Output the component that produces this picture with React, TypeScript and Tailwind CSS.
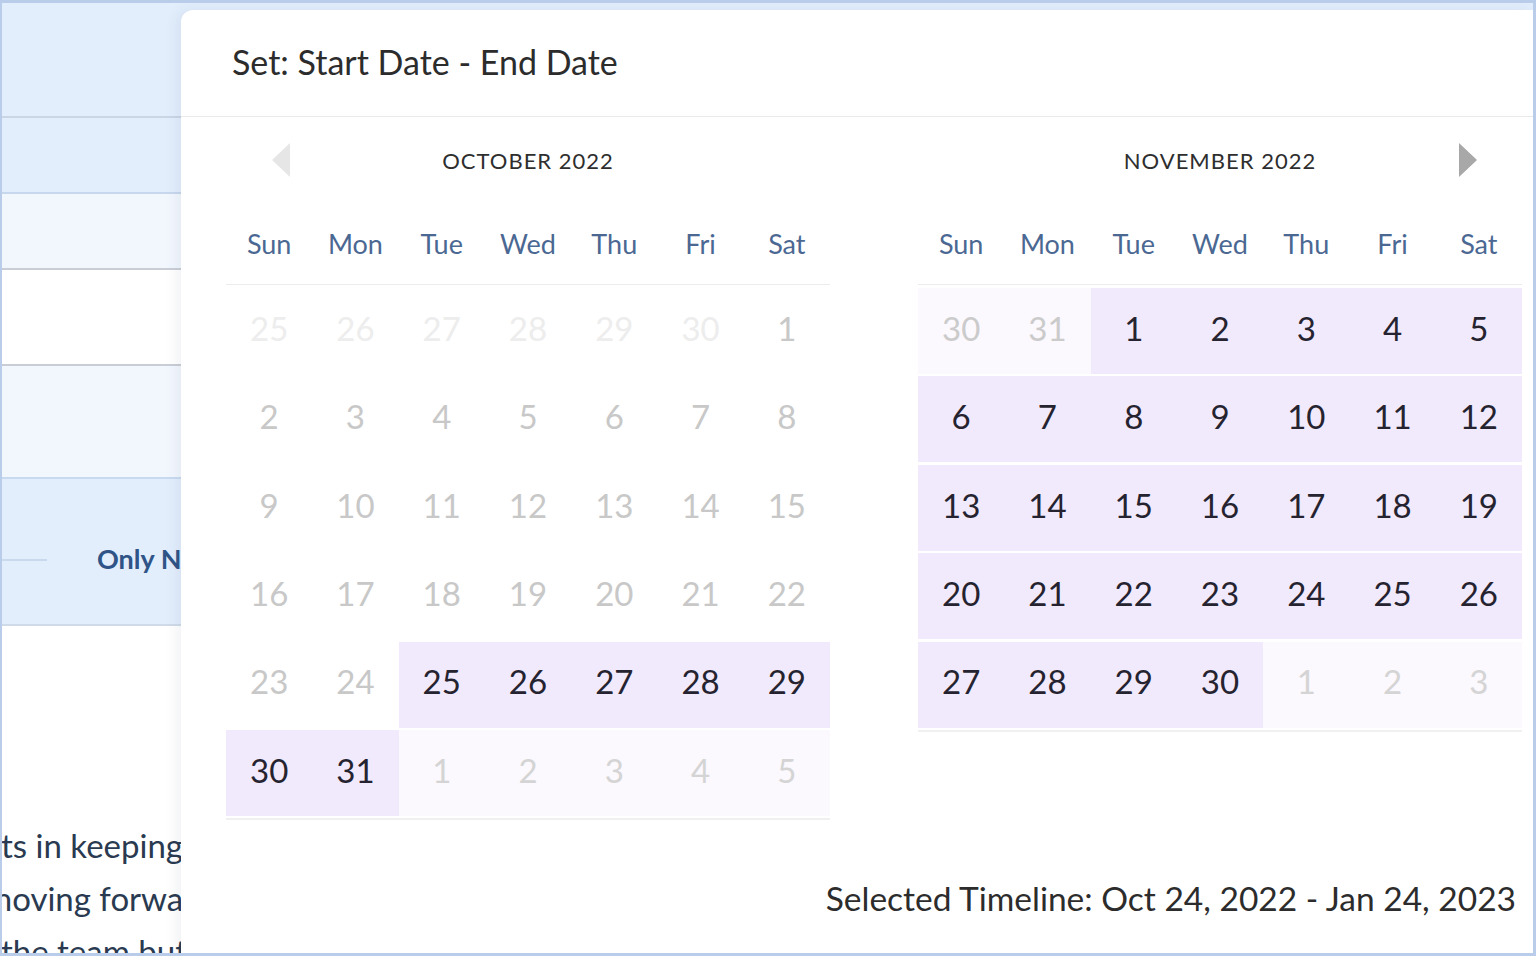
import React from 'react';

type Kind = 'faint' | 'muted' | 'range' | 'next' | 'prev';
type Cell = { d: number; k: Kind };

const days = ['Sun', 'Mon', 'Tue', 'Wed', 'Thu', 'Fri', 'Sat'];

const oct: Cell[][] = [
  [25, 26, 27, 28, 29, 30].map((d) => ({ d, k: 'faint' as Kind })).concat([{ d: 1, k: 'muted' }]),
  [2, 3, 4, 5, 6, 7, 8].map((d) => ({ d, k: 'muted' as Kind })),
  [9, 10, 11, 12, 13, 14, 15].map((d) => ({ d, k: 'muted' as Kind })),
  [16, 17, 18, 19, 20, 21, 22].map((d) => ({ d, k: 'muted' as Kind })),
  [
    { d: 23, k: 'muted' },
    { d: 24, k: 'muted' },
    ...[25, 26, 27, 28, 29].map((d) => ({ d, k: 'range' as Kind })),
  ],
  [
    { d: 30, k: 'range' },
    { d: 31, k: 'range' },
    ...[1, 2, 3, 4, 5].map((d) => ({ d, k: 'next' as Kind })),
  ],
];

const nov: Cell[][] = [
  [
    { d: 30, k: 'prev' },
    { d: 31, k: 'prev' },
    ...[1, 2, 3, 4, 5].map((d) => ({ d, k: 'range' as Kind })),
  ],
  [6, 7, 8, 9, 10, 11, 12].map((d) => ({ d, k: 'range' as Kind })),
  [13, 14, 15, 16, 17, 18, 19].map((d) => ({ d, k: 'range' as Kind })),
  [20, 21, 22, 23, 24, 25, 26].map((d) => ({ d, k: 'range' as Kind })),
  [
    ...[27, 28, 29, 30].map((d) => ({ d, k: 'range' as Kind })),
    ...[1, 2, 3].map((d) => ({ d, k: 'next' as Kind })),
  ],
];

const kindClass: Record<Kind, string> = {
  faint: 'bg-white text-[#ededed]',
  muted: 'bg-white text-[#c8c8c8]',
  range: 'bg-[#f1e9fc] text-[#25232f]',
  next: 'bg-[#fbf8fe] text-[#d4d4d4]',
  prev: 'bg-[#fbf8fe] text-[#cbcbcb]',
};

function Month({
  title,
  rows,
  arrow,
}: {
  title: string;
  rows: Cell[][];
  arrow: 'left' | 'right';
}) {
  return (
    <div className="w-[604px] flex flex-col">
      <div className="h-[86px] grid grid-cols-[1fr_auto_1fr] items-center">
        <div className="flex items-center">
          {arrow === 'left' && (
            <svg width="18" height="34" viewBox="0 0 18 34" className="ml-[46px]">
              <polygon points="18,0 18,34 0,17" fill="#e6e6e6" />
            </svg>
          )}
        </div>
        <div className="text-[22px] tracking-[1px] text-[#2e2e2e] font-['Lato',sans-serif] uppercase">
          {title}
        </div>
        <div className="flex items-center justify-end">
          {arrow === 'right' && (
            <svg width="18" height="34" viewBox="0 0 18 34" className="mr-[45px]">
              <polygon points="0,0 0,34 18,17" fill="#a8a8a8" />
            </svg>
          )}
        </div>
      </div>
      <div className="h-[82px] grid grid-cols-7 items-center border-b border-[#ececec]">
        {days.map((d) => (
          <div
            key={d}
            className="text-center text-[27px] text-[#4b6893] font-['Lato',sans-serif] pt-[2px]"
          >
            {d}
          </div>
        ))}
      </div>
      <div className="mt-[3px] flex flex-col gap-[2.4px] pb-[2px] border-b-2 border-[#f0f0f0]">
        {rows.map((row, i) => (
          <div key={i} className="grid grid-cols-7 h-[86px]">
            {row.map((c, j) => (
              <div
                key={j}
                className={`flex items-center justify-center pb-[5px] text-[33px] font-normal font-['Lato',sans-serif] ${kindClass[c.k]}`}
              >
                {c.d}
              </div>
            ))}
          </div>
        ))}
      </div>
    </div>
  );
}

export default function App() {
  return (
    <div className="relative w-[1536px] h-[956px] overflow-hidden bg-white border-t-[3px] border-l-[2px] border-r-[3px] border-b-[3px] border-[#b9cce9] font-['Lato',sans-serif]">
      {/* background page */}
      <div className="flex flex-col">
        <div className="h-[115px] bg-[#e2eefc] border-b-2 border-[#cad6e5]" />
        <div className="h-[76px] bg-[#e2eefc] border-b-2 border-[#c7d8ee]" />
        <div className="h-[76px] bg-[#f2f7fe] border-b-2 border-[#c9ced6]" />
        <div className="h-[96px] bg-white border-b-2 border-[#c9ced6]" />
        <div className="h-[113px] bg-[#f2f7fe] border-b-2 border-[#c8daf0]" />
        <div className="h-[147px] bg-[#e2eefc] border-b-2 border-[#cfdbe8] flex items-center pt-[16px]">
          <div className="w-[45px] h-[2px] bg-[#c9d9ee]" />
          <div className="ml-[50px] text-[27px] font-bold text-[#2f5487] whitespace-nowrap">
            Only New Items
          </div>
        </div>
        <div className="mt-[193px] text-[33px] leading-[53px] text-[#2a3a50] whitespace-nowrap">
          <div className="-ml-[1px]">ts in keeping with the goals</div>
          <div className="-ml-[17px]">moving forward with the plan</div>
          <div className="-ml-[1px]">the team but</div>
        </div>
      </div>

      {/* popup overlay */}
      <div className="absolute left-[179px] top-[7px] right-0 bottom-0 bg-white rounded-tl-[12px] shadow-[-4px_0_14px_rgba(40,60,90,0.07)] flex flex-col">
        <div className="h-[107px] border-b border-[#e9e9e9] flex items-center pl-[51px] pb-[4px]">
          <span className="text-[34px] text-[#2c2c2c]">Set: Start Date - End Date</span>
        </div>
        <div className="flex pl-[45px] gap-[88px]">
          <Month title="October 2022" rows={oct} arrow="left" />
          <Month title="November 2022" rows={nov} arrow="right" />
        </div>
        <div className="mt-auto flex justify-end pr-[17px] pb-[34px]">
          <span className="text-[33.5px] leading-[42px] text-[#2c2c2c]">
            Selected Timeline: Oct 24, 2022 - Jan 24, 2023
          </span>
        </div>
      </div>
    </div>
  );
}
